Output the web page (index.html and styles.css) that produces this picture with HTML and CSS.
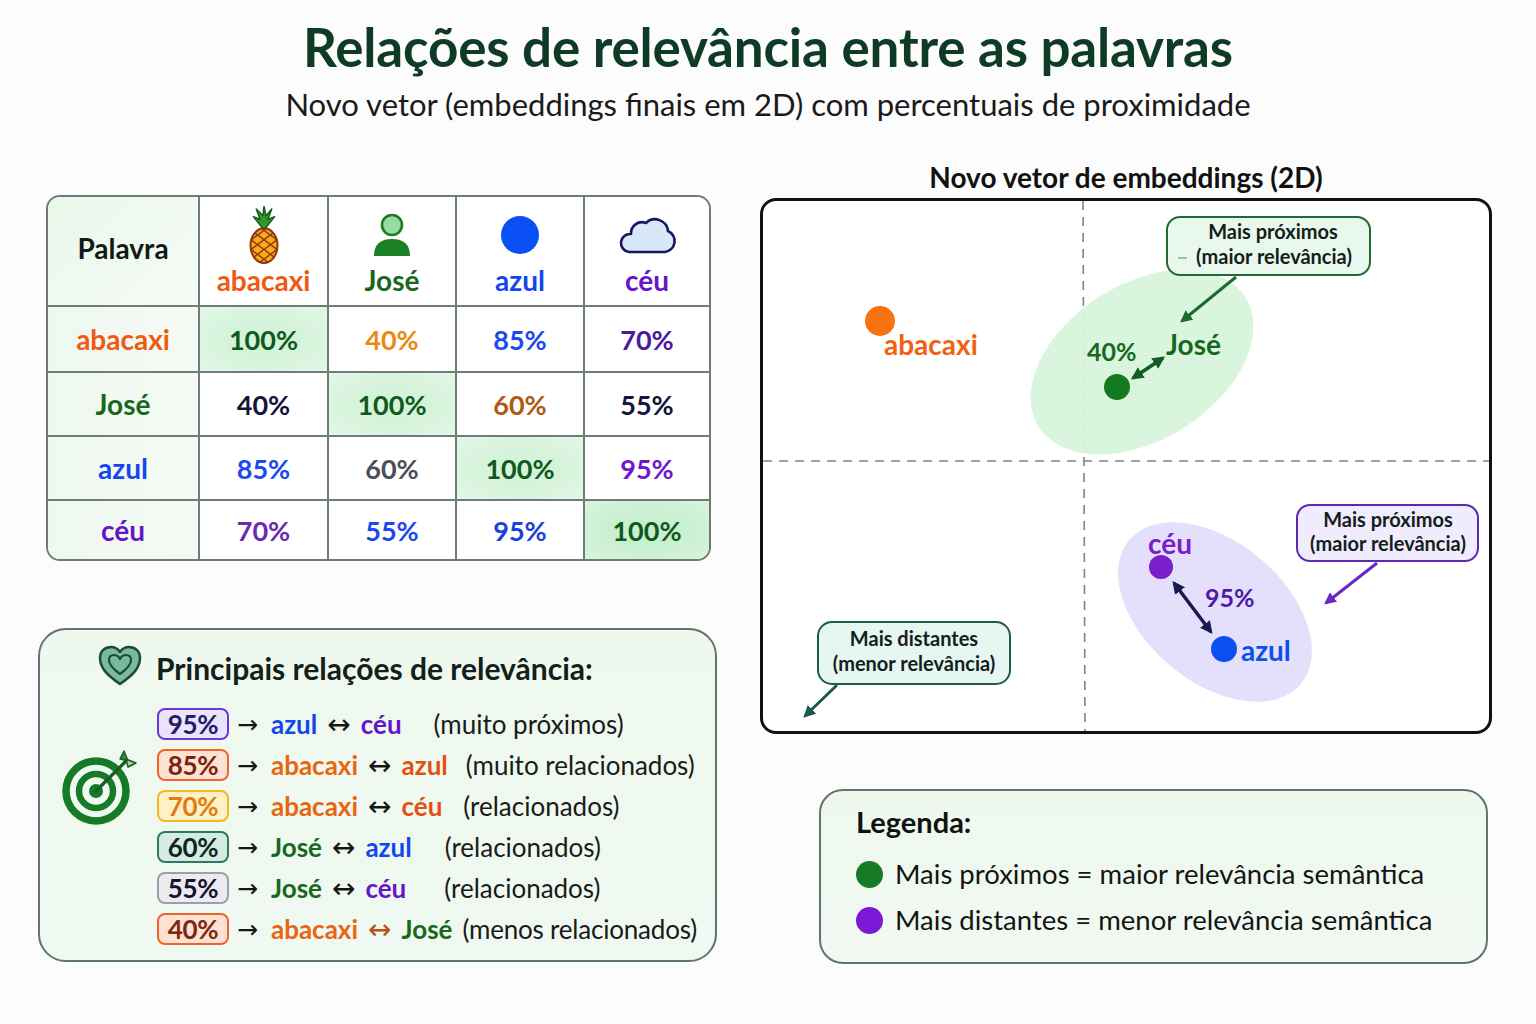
FILE: index.html
```html
<!DOCTYPE html>
<html lang="pt">
<head>
<meta charset="utf-8">
<title>Relações de relevância entre as palavras</title>
<link rel="stylesheet" href="styles.css">
</head>
<body>
<header class="head">
  <h1 class="title">Relações de relevância entre as palavras</h1>
  <p class="subtitle">Novo vetor (embeddings finais em 2D) com percentuais de proximidade</p>
</header>

<main class="main">
  <section class="left">
    <div class="table-wrap">
      <table class="matrix">
        <colgroup>
          <col class="c0"><col class="c1"><col class="c2"><col class="c3"><col class="c4">
        </colgroup>
        <thead>
          <tr>
            <th class="corner">Palavra</th>
            <th>
              <div class="hicon">
                <svg width="40" height="58" viewBox="0 0 40 60">
                  <defs><clipPath id="pb"><ellipse cx="20" cy="41" rx="14" ry="18"/></clipPath></defs>
                  <path d="M20 25 L9 11 L16 14 L12 3 L19 10 L20 0 L22 10 L28 3 L24 14 L31 11 Z" fill="#2e9a2c" stroke="#175e1a" stroke-width="1.5" stroke-linejoin="round"/>
                  <ellipse cx="20" cy="41" rx="14" ry="18" fill="#f7ac1c"/>
                  <g clip-path="url(#pb)" stroke="#9a3f0e" stroke-width="1.6">
                    <line x1="0" y1="30" x2="40" y2="60"/><line x1="0" y1="20" x2="40" y2="50"/><line x1="0" y1="40" x2="40" y2="70"/><line x1="0" y1="10" x2="40" y2="40"/>
                    <line x1="40" y1="30" x2="0" y2="60"/><line x1="40" y1="20" x2="0" y2="50"/><line x1="40" y1="40" x2="0" y2="70"/><line x1="40" y1="10" x2="0" y2="40"/>
                  </g>
                  <ellipse cx="20" cy="41" rx="14" ry="18" fill="none" stroke="#8a3410" stroke-width="2"/>
                </svg>
              </div>
              <span class="w-aba">abacaxi</span>
            </th>
            <th>
              <div class="hicon">
                <svg width="40" height="44" viewBox="0 0 40 44">
                  <circle cx="20" cy="12" r="10" fill="#97dca2" stroke="#1b7a25" stroke-width="2.6"/>
                  <path d="M2 43 Q2 26 20 26 Q38 26 38 43 Z" fill="#1e8026"/>
                </svg>
              </div>
              <span class="w-jose">José</span>
            </th>
            <th>
              <div class="hicon">
                <svg width="40" height="40" viewBox="0 0 40 40"><circle cx="20" cy="20" r="19" fill="#0a50f5"/></svg>
              </div>
              <span class="w-azul">azul</span>
            </th>
            <th>
              <div class="hicon">
                <svg width="64" height="40" viewBox="0 0 64 40">
                  <path d="M14 37 H50 A11 11 0 0 0 53 16 A13 13 0 0 0 31 8 A11 11 0 0 0 16 19 A9 9 0 0 0 14 37 Z" fill="#d9e8f8" stroke="#16185e" stroke-width="2.6" stroke-linejoin="round"/>
                </svg>
              </div>
              <span class="w-ceu">céu</span>
            </th>
          </tr>
        </thead>
        <tbody>
          <tr class="r1">
            <th class="w-aba">abacaxi</th>
            <td class="diag">100%</td>
            <td class="p-orange">40%</td>
            <td class="p-blue">85%</td>
            <td class="p-dpurple">70%</td>
          </tr>
          <tr class="r2">
            <th class="w-jose">José</th>
            <td class="p-navy">40%</td>
            <td class="diag">100%</td>
            <td class="p-brown">60%</td>
            <td class="p-navy">55%</td>
          </tr>
          <tr class="r3">
            <th class="w-azul">azul</th>
            <td class="p-blue">85%</td>
            <td class="p-gray">60%</td>
            <td class="diag">100%</td>
            <td class="p-purple">95%</td>
          </tr>
          <tr class="r4">
            <th class="w-ceu">céu</th>
            <td class="p-mpurple">70%</td>
            <td class="p-blue">55%</td>
            <td class="p-blue2">95%</td>
            <td class="diag strong">100%</td>
          </tr>
        </tbody>
      </table>
    </div>

    <div class="relations">
      <div class="rel-head">
        <svg class="heart" width="46" height="42" viewBox="0 0 46 42">
          <path d="M23 39 C10 30 3 23 3 13 C3 6 8 2 14 2 C18 2 21 4 23 7 C25 4 28 2 32 2 C38 2 43 6 43 13 C43 23 36 30 23 39 Z" fill="#79b99f" stroke="#1e4a3c" stroke-width="2.5" stroke-linejoin="round"/>
          <path d="M23 29 C16 24 12 20 12 15 C12 12 14 10 17 10 C20 10 22 12 23 14 C24 12 26 10 29 10 C32 10 34 12 34 15 C34 20 30 24 23 29 Z" fill="none" stroke="#1e4a3c" stroke-width="2.2" stroke-linejoin="round"/>
        </svg>
        <h2 class="rel-title">Principais relações de relevância:</h2>
      </div>
      <div class="rel-body">
        <svg class="target" width="76" height="76" viewBox="0 0 76 76">
          <circle cx="34" cy="42" r="30" fill="none" stroke="#177a29" stroke-width="7.5"/>
          <circle cx="34" cy="42" r="17" fill="none" stroke="#177a29" stroke-width="6.5"/>
          <circle cx="34" cy="42" r="7" fill="#177a29"/>
          <line x1="34" y1="42" x2="64" y2="12" stroke="#1b5a22" stroke-width="3.2" stroke-linecap="round"/>
          <path d="M58 10 L62 2 L66 12 Z" fill="#2e8a34" stroke="#1b5a22" stroke-width="1.5" stroke-linejoin="round"/>
          <path d="M66 18 L74 14 L64 10 Z" fill="#a9d68c" stroke="#1b5a22" stroke-width="1.5" stroke-linejoin="round"/>
        </svg>
        <ul class="rel-list">
          <li><span class="badge b95">95%</span><span class="arr">→</span><span class="c-blue">azul</span><span class="lr">↔</span><span class="c-purple">céu</span><span class="desc d1">(muito próximos)</span></li>
          <li><span class="badge b85">85%</span><span class="arr">→</span><span class="c-orange">abacaxi</span><span class="lr">↔</span><span class="c-red">azul</span><span class="desc d2">(muito relacionados)</span></li>
          <li><span class="badge b70">70%</span><span class="arr">→</span><span class="c-orange">abacaxi</span><span class="lr">↔</span><span class="c-red">céu</span><span class="desc d3">(relacionados)</span></li>
          <li><span class="badge b60">60%</span><span class="arr">→</span><span class="c-green">José</span><span class="lr">↔</span><span class="c-blue">azul</span><span class="desc d4">(relacionados)</span></li>
          <li><span class="badge b55">55%</span><span class="arr">→</span><span class="c-green">José</span><span class="lr">↔</span><span class="c-purple">céu</span><span class="desc d5">(relacionados)</span></li>
          <li><span class="badge b40">40%</span><span class="arr">→</span><span class="c-orange">abacaxi</span><span class="lr lr-o">↔</span><span class="c-green">José</span><span class="desc d6">(menos relacionados)</span></li>
        </ul>
      </div>
    </div>
  </section>

  <section class="right">
    <h2 class="chart-title">Novo vetor de embeddings (2D)</h2>
    <div class="chart">
      <svg class="plot" width="726" height="530" viewBox="763 201 726 530">
        <defs>
          <marker id="mg" viewBox="0 0 10 10" refX="8" refY="5" markerWidth="4" markerHeight="4" orient="auto-start-reverse"><path d="M0 0 L10 5 L0 10 Z" fill="#1a6b2a"/></marker>
          <marker id="mdg" viewBox="0 0 10 10" refX="8" refY="5" markerWidth="3.6" markerHeight="3.6" orient="auto-start-reverse"><path d="M0 0 L10 5 L0 10 Z" fill="#135e22"/></marker>
          <marker id="mp" viewBox="0 0 10 10" refX="8" refY="5" markerWidth="4" markerHeight="4" orient="auto-start-reverse"><path d="M0 0 L10 5 L0 10 Z" fill="#6a25c8"/></marker>
          <marker id="mn" viewBox="0 0 10 10" refX="8" refY="5" markerWidth="3.6" markerHeight="3.6" orient="auto-start-reverse"><path d="M0 0 L10 5 L0 10 Z" fill="#191a4e"/></marker>
          <marker id="mt" viewBox="0 0 10 10" refX="8" refY="5" markerWidth="4" markerHeight="4" orient="auto-start-reverse"><path d="M0 0 L10 5 L0 10 Z" fill="#1d5a4e"/></marker>
        </defs>

        <line x1="1083" y1="201" x2="1085" y2="731" stroke="#7d8583" stroke-width="1.6" stroke-dasharray="9 7"/>
        <line x1="763" y1="461" x2="1489" y2="461" stroke="#7d8583" stroke-width="1.6" stroke-dasharray="9 7"/>

        <ellipse cx="1142" cy="362" rx="122" ry="78" transform="rotate(-32 1142 362)" fill="#d6f4db" opacity="0.92"/>
        <ellipse cx="1215" cy="612" rx="112" ry="70" transform="rotate(40 1215 612)" fill="#e4e0fb"/>

        <circle cx="880" cy="321" r="15" fill="#f8730f"/>
        <text x="884" y="355" class="pl pl-aba">abacaxi</text>

        <circle cx="1117" cy="387" r="13" fill="#137a20"/>
        <text x="1087" y="361" class="pl pl-pct-g">40%</text>
        <text x="1166" y="355" class="pl pl-jose">José</text>
        <line x1="1133" y1="378" x2="1163" y2="358" stroke="#135e22" stroke-width="3.5" marker-start="url(#mdg)" marker-end="url(#mdg)"/>

        <circle cx="1161" cy="567" r="12" fill="#7a1fcb"/>
        <text x="1148" y="554" class="pl pl-ceu">céu</text>
        <circle cx="1224" cy="649" r="13" fill="#0b4ff0"/>
        <text x="1241" y="661" class="pl pl-azul">azul</text>
        <text x="1205" y="607" class="pl pl-pct-p">95%</text>
        <line x1="1174" y1="583" x2="1211" y2="632" stroke="#191a4e" stroke-width="3.5" marker-start="url(#mn)" marker-end="url(#mn)"/>

        <rect x="1167" y="217" width="203" height="58" rx="13" fill="#e9f8ec" stroke="#1f6b35" stroke-width="2"/>
        <text x="1273" y="239" class="call">Mais próximos</text>
        <line x1="1178" y1="258" x2="1187" y2="258" stroke="#7fb58b" stroke-width="1.5"/>
        <text x="1274" y="264" class="call">(maior relevância)</text>
        <line x1="1236" y1="277" x2="1182" y2="321" stroke="#1a6b2a" stroke-width="3" marker-end="url(#mg)"/>

        <rect x="1297" y="505" width="181" height="56" rx="13" fill="#f0ecfd" stroke="#5a2ab0" stroke-width="2"/>
        <text x="1388" y="527" class="call">Mais próximos</text>
        <text x="1388" y="551" class="call">(maior relevância)</text>
        <line x1="1377" y1="563" x2="1326" y2="603" stroke="#6a25c8" stroke-width="3" marker-end="url(#mp)"/>

        <rect x="818" y="622" width="192" height="62" rx="14" fill="#e6f7f2" stroke="#1d5a4e" stroke-width="2"/>
        <text x="914" y="646" class="call">Mais distantes</text>
        <text x="914" y="671" class="call">(menor relevância)</text>
        <line x1="837" y1="685" x2="805" y2="716" stroke="#1d5a4e" stroke-width="3" marker-end="url(#mt)"/>
      </svg>
    </div>

    <div class="legend">
      <h3 class="legend-title">Legenda:</h3>
      <div class="legend-row"><span class="dot dot-green"></span>Mais próximos = maior relevância semântica</div>
      <div class="legend-row"><span class="dot dot-purple"></span>Mais distantes = menor relevância semântica</div>
    </div>
  </section>
</main>
</body>
</html>
```

FILE: styles.css
```css
* { box-sizing: border-box; }
html, body { margin: 0; padding: 0; }
body {
  width: 1536px;
  height: 1024px;
  overflow: hidden;
  background: #fbfcfb;
  font-family: "Lato", "Liberation Sans", sans-serif;
  color: #151515;
}

.head { text-align: center; padding-top: 19px; }
.title {
  margin: 0;
  font-size: 53px;
  line-height: 56px;
  font-weight: 700;
  color: #0f3b26;
  letter-spacing: -0.2px;
}
.subtitle {
  margin: 11px 0 0;
  font-size: 31px;
  line-height: 36px;
  color: #1a1a1a;
}

.main {
  display: grid;
  grid-template-columns: 679px 732px;
  column-gap: 43px;
  padding-left: 38px;
  margin-top: 38px;
}

/* ---------- table ---------- */
.table-wrap {
  margin: 35px 6px 0 8px;
  width: 665px;
  border: 2px solid #6d7b77;
  border-radius: 14px;
  overflow: hidden;
  background: #fff;
}
.matrix {
  width: 661px;
  border-collapse: collapse;
  border-style: hidden;
  table-layout: fixed;
}
.c0 { width: 151px; }
.c1 { width: 129px; }
.c2 { width: 128px; }
.c3 { width: 128px; }
.c4 { width: 125px; }
.matrix th, .matrix td {
  border: 2px solid #6f7c79;
  text-align: center;
  padding: 0;
  font-size: 27px;
  font-weight: 700;
}
.matrix th { font-size: 28px; }
.matrix thead th { height: 109px; vertical-align: top; padding-top: 9px; background: #fff; }
.matrix thead th.corner {
  vertical-align: middle;
  padding: 0 0 6px;
  color: #111a15;
  font-size: 28px;
  background: linear-gradient(135deg, #e9f7ea, #f6fbf6);
}
.hicon { height: 58px; display: flex; align-items: center; justify-content: center; }
.matrix thead th span { display: block; line-height: 32px; }
.r1 > * { height: 66px; }
.r2 > * { height: 64px; }
.r3 > * { height: 64px; }
.r4 > * { height: 59px; }
.matrix tbody th { background: linear-gradient(90deg, #eef8ef, #f5faf5); }
.matrix tbody td { background: #fff; }
.matrix tbody td.diag {
  background: radial-gradient(ellipse at center, #d5f3da 40%, #e2f7e6 100%);
  color: #0f5a1b;
}
.matrix tbody td.diag.strong { background: radial-gradient(ellipse at center, #c9efd1 40%, #d8f4dd 100%); }

.w-aba { color: #f05a12; }
.w-jose { color: #17681d; }
.w-azul { color: #1446ef; }
.w-ceu { color: #6516c8; }
.p-orange { color: #e98a12; }
.p-blue { color: #1b48f0; }
.p-blue2 { color: #1a3fe2; }
.p-dpurple { color: #4a1a9c; }
.p-navy { color: #15153a; }
.p-brown { color: #b2580f; }
.p-gray { color: #4a4f56; }
.p-purple { color: #7018d0; }
.p-mpurple { color: #6a2bb2; }

/* ---------- relations ---------- */
.relations {
  margin-top: 67px;
  width: 679px;
  height: 334px;
  border: 2px solid #5f7571;
  border-radius: 28px;
  background: linear-gradient(180deg, #eef8ee, #f0f9f1);
  padding: 18px 0 0 22px;
}
.rel-head { display: flex; align-items: center; gap: 13px; margin-left: 35px; }
.heart { margin-top: -3px; }
.rel-title {
  margin: 0;
  font-size: 30px;
  font-weight: 700;
  color: #132019;
  line-height: 38px;
}
.rel-body { display: flex; align-items: flex-start; margin-top: 21px; }
.target { flex: none; margin-top: 41px; }
.rel-list {
  list-style: none;
  margin: 0 0 0 19px;
  padding: 0;
  display: flex;
  flex-direction: column;
  gap: 9px;
}
.rel-list li {
  display: flex;
  align-items: center;
  height: 32px;
  font-size: 26px;
  white-space: nowrap;
}
.badge {
  width: 72px;
  height: 32px;
  border: 2px solid;
  border-radius: 8px;
  display: flex;
  align-items: center;
  justify-content: center;
  font-size: 26px;
  font-weight: 700;
  letter-spacing: -0.3px;
}
.b95 { background: #e9e3fc; border-color: #6a3ad2; color: #291a6a; }
.b85 { background: #fde1d2; border-color: #f0642c; color: #7a2310; }
.b70 { background: #fff1c6; border-color: #f5b820; color: #e27a10; }
.b60 { background: #d4ece3; border-color: #2e7a61; color: #10261f; }
.b55 { background: #eceaf1; border-color: #a09eae; color: #15152f; }
.b40 { background: #fde1d2; border-color: #f0642c; color: #7a2a10; }

.arr { font-family: "DejaVu Sans", sans-serif; font-size: 25px; color: #151515; margin: 0 13px 0 8px; }
.lr { font-family: "DejaVu Sans", sans-serif; font-size: 28px; color: #151515; margin: 0 10px; }
.lr-o { color: #b4521a; }
.c-blue { color: #1446ef; font-weight: 700; }
.c-purple { color: #6516c8; font-weight: 700; }
.c-orange { color: #e8660f; font-weight: 700; }
.c-red { color: #e44f10; font-weight: 700; }
.c-green { color: #17681d; font-weight: 700; }
.desc { color: #1a1a1a; }
.d1 { margin-left: 32px; }
.d2 { margin-left: 18px; }
.d3 { margin-left: 21px; }
.d4 { margin-left: 33px; }
.d5 { margin-left: 38px; }
.d6 { margin-left: 10px; letter-spacing: -0.2px; }

/* ---------- chart ---------- */
.chart-title {
  margin: 0 0 4px;
  text-align: center;
  font-size: 28px;
  line-height: 34px;
  font-weight: 700;
  color: #111;
}
.chart {
  position: relative;
  width: 732px;
  height: 536px;
  border: 3px solid #111;
  border-radius: 16px;
  background: #fff;
  overflow: hidden;
}
.plot { display: block; }
.pl { font-family: "Lato", "Liberation Sans", sans-serif; font-weight: 700; font-size: 28px; }
.pl-aba { fill: #f3600f; }
.pl-jose { fill: #17681d; }
.pl-pct-g { fill: #17681d; font-size: 25px; }
.pl-ceu { fill: #7a1fcb; }
.pl-azul { fill: #0b4ff0; }
.pl-pct-p { fill: #4f1aa8; font-size: 25px; }
.call {
  font-family: "Lato", "Liberation Sans", sans-serif;
  font-weight: 700;
  font-size: 20px;
  fill: #13201a;
  text-anchor: middle;
}

/* ---------- legend ---------- */
.legend {
  margin: 55px 4px 0 59px;
  height: 175px;
  border: 2px solid #5f7571;
  border-radius: 24px;
  background: linear-gradient(180deg, #eef8ee, #f1f9f2);
  padding: 14px 0 0 35px;
}
.legend-title {
  margin: 0 0 18px;
  font-size: 29px;
  line-height: 34px;
  font-weight: 700;
  color: #111;
}
.legend-row {
  display: flex;
  align-items: center;
  gap: 12px;
  font-size: 27.5px;
  line-height: 34px;
  color: #141414;
  margin-bottom: 12px;
}
.dot { width: 27px; height: 27px; border-radius: 50%; flex: none; }
.dot-green { background: #177a24; }
.dot-purple { background: #7a1ad6; }
```
